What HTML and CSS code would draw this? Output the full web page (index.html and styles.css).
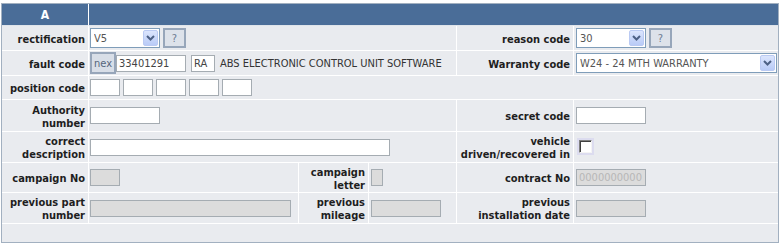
FILE: index.html
```html
<!DOCTYPE html>
<html lang="en">
<head>
    <meta charset="UTF-8">
    <title>Fault details</title>
    <link rel="stylesheet" href="styles.css">
</head>
<body>
    <div class="panel">
        <table class="form-table">
            <colgroup>
                <col class="c1"><col class="c2"><col class="c3"><col class="c4"><col class="c5"><col class="c6">
            </colgroup>
            <tr class="h-head">
                <th class="head">A</th>
                <th class="head" colspan="5"></th>
            </tr>
            <tr class="h-25">
                <td class="lbl">rectification</td>
                <td class="val first" colspan="3">
                    <div class="line">
                        <span class="select sel-short"><span class="sel-text">V5</span><span class="sel-btn"><svg width="9" height="6" viewBox="0 0 9 6"><path d="M1 1l3.5 3.5L8 1" fill="none" stroke="#4d6185" stroke-width="2"/></svg></span></span>
                        <button class="help" type="button">?</button>
                    </div>
                </td>
                <td class="lbl">reason code</td>
                <td class="val">
                    <div class="line">
                        <span class="select sel-short"><span class="sel-text">30</span><span class="sel-btn"><svg width="9" height="6" viewBox="0 0 9 6"><path d="M1 1l3.5 3.5L8 1" fill="none" stroke="#4d6185" stroke-width="2"/></svg></span></span>
                        <button class="help" type="button">?</button>
                    </div>
                </td>
            </tr>
            <tr class="h-25">
                <td class="lbl">fault code</td>
                <td class="val first" colspan="3">
                    <div class="line">
                        <span class="nex">nex</span>
                        <input class="field w-fault" type="text" value="33401291">
                        <input class="field w-ra" type="text" value="RA">
                        <span class="desc">ABS ELECTRONIC CONTROL UNIT SOFTWARE</span>
                    </div>
                </td>
                <td class="lbl">Warranty code</td>
                <td class="val">
                    <span class="select sel-long"><span class="sel-text">W24 - 24 MTH WARRANTY</span><span class="sel-btn"><svg width="9" height="6" viewBox="0 0 9 6"><path d="M1 1l3.5 3.5L8 1" fill="none" stroke="#4d6185" stroke-width="2"/></svg></span></span>
                </td>
            </tr>
            <tr class="h-24">
                <td class="lbl">position code</td>
                <td class="val first" colspan="5">
                    <div class="line pos">
                        <input class="field w-pos" type="text">
                        <input class="field w-pos" type="text">
                        <input class="field w-pos" type="text">
                        <input class="field w-pos" type="text">
                        <input class="field w-pos" type="text">
                    </div>
                </td>
            </tr>
            <tr class="h-32">
                <td class="lbl">Authority number</td>
                <td class="val first" colspan="3"><input class="field w-70" type="text"></td>
                <td class="lbl">secret code</td>
                <td class="val"><input class="field w-70" type="text"></td>
            </tr>
            <tr class="h-31">
                <td class="lbl">correct description</td>
                <td class="val first" colspan="3"><input class="field w-desc" type="text"></td>
                <td class="lbl">vehicle driven/recovered in</td>
                <td class="val"><span class="check"></span></td>
            </tr>
            <tr class="h-30">
                <td class="lbl">campaign No</td>
                <td class="val first"><input class="field w-30" type="text" disabled></td>
                <td class="lbl">campaign letter</td>
                <td class="val"><input class="field w-12" type="text" disabled></td>
                <td class="lbl">contract No</td>
                <td class="val"><input class="field w-70" type="text" placeholder="0000000000" disabled></td>
            </tr>
            <tr class="h-31">
                <td class="lbl">previous part number</td>
                <td class="val first"><input class="field w-part" type="text" disabled></td>
                <td class="lbl">previous mileage</td>
                <td class="val"><input class="field w-70" type="text" disabled></td>
                <td class="lbl">previous installation date</td>
                <td class="val"><input class="field w-70" type="text" disabled></td>
            </tr>
            <tr class="h-18">
                <td colspan="6"></td>
            </tr>
        </table>
    </div>
</body>
</html>
```

FILE: styles.css
```css
body {
    margin: 3px 1px 0 1px;
    background-color: #fff;
    font-family: "DejaVu Sans Condensed", "DejaVu Sans", sans-serif;
    font-size: 11px;
    color: #1e1e1e;
}
.panel {
    width: 776px;
    border: 1px solid #a2b0c0;
}
.form-table {
    width: 100%;
    table-layout: fixed;
    border-collapse: separate;
    border-spacing: 0;
}
.c1 { width: 87px; }
.c2 { width: 210px; }
.c3 { width: 70px; }
.c4 { width: 88px; }
.c5 { width: 117px; }
.c6 { width: 204px; }
.form-table th,
.form-table td {
    padding: 0;
    border-right: 1px solid #fff;
    border-bottom: 1px solid #fff;
    background-color: #e9ebef;
    vertical-align: middle;
}
.form-table tr > :last-child {
    border-right: 0;
}
.form-table tr:last-child td {
    border-bottom: 0;
}
.form-table th.head {
    background-color: #4a6d98;
    color: #fff;
    font-weight: bold;
    font-size: 12px;
    text-align: center;
    border-bottom-color: #dfe4ea;
}
.h-head { height: 22px; }
.h-25 { height: 25px; }
.h-24 { height: 24px; }
.h-32 { height: 32px; }
.h-31 { height: 31px; }
.h-30 { height: 30px; }
.h-18 { height: 18px; }
.form-table td.lbl {
    text-align: right;
    font-weight: bold;
    padding: 2px 3px 0 0;
    line-height: 13px;
}
.form-table td.val {
    padding-left: 2px;
}
.form-table td.val.first {
    padding-left: 1px;
}
.line {
    display: flex;
    align-items: center;
}
.pos {
    gap: 3px;
}
.select {
    display: inline-flex;
    align-items: center;
    box-sizing: border-box;
    height: 20px;
    border: 1px solid #7f9db9;
    background-color: #fff;
    color: #555;
    padding: 0 1px 0 3px;
}
.sel-short { width: 70px; }
.sel-long { width: 201px; }
.sel-text {
    flex: 1;
    white-space: nowrap;
    overflow: hidden;
}
.sel-btn {
    display: flex;
    align-items: center;
    justify-content: center;
    width: 15px;
    height: 16px;
    box-sizing: border-box;
    border: 1px solid #bacaf3;
    border-radius: 2px;
    background: linear-gradient(#dbe5fd, #b9cbf7);
}
.help {
    box-sizing: border-box;
    width: 23px;
    height: 20px;
    margin: 0 0 0 3px;
    padding: 0;
    border: 2px solid #97a6ba;
    background-color: #dde2ea;
    color: #6d7d93;
    font-family: inherit;
    font-size: 11px;
}
.nex {
    box-sizing: border-box;
    width: 26px;
    height: 22px;
    display: flex;
    align-items: center;
    justify-content: center;
    border: 2px solid #97a6ba;
    background-color: #d8dee7;
    color: #55657c;
}
.field {
    box-sizing: border-box;
    height: 17px;
    border: 1px solid #a5acb2;
    background-color: #fff;
    padding: 0 2px;
    margin: 0;
    font-family: inherit;
    font-size: 11px;
    color: #444;
    vertical-align: middle;
}
.field:disabled {
    background-color: #dcdcdc;
}
.field::placeholder {
    color: #b7b7b7;
}
.w-fault { width: 70px; }
.w-ra { width: 24px; margin-left: 5px; }
.w-pos { width: 30px; }
.w-70 { width: 70px; }
.w-desc { width: 300px; }
.w-30 { width: 30px; }
.w-12 { width: 12px; }
.w-part { width: 201px; }
.desc {
    margin-left: 5px;
    color: #333;
    white-space: nowrap;
}
.check {
    display: block;
    width: 13px;
    height: 13px;
    box-sizing: border-box;
    margin: 0 0 2px 3px;
    background-color: #fff;
    border-top: 1px solid #808080;
    border-left: 1px solid #808080;
    border-right: 1px solid #f4f4f4;
    border-bottom: 1px solid #f4f4f4;
    box-shadow: inset 1px 1px 0 #404040, 0 0 0 2px #dcdcef;
}
```
